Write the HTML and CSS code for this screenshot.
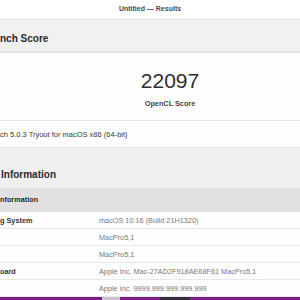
FILE: index.html
```html
<html><head>
<meta charset="UTF-8">
<meta name="viewport" content="width=device-width, initial-scale=1.0">
<title>Untitled — Results</title>
<link rel="stylesheet" href="styles.css">
</head>
<body>
  <div class="window">
    <header class="titlebar">Untitled — Results</header>

    <div class="section-head">nch Score</div>

    <div class="score-panel">
      <div class="score">22097</div>
      <div class="score-label">OpenCL Score</div>
    </div>

    <div class="version-row">ch 5.0.3 Tryout for macOS x86 (64-bit)</div>

    <div class="info-head">Information</div>

    <div class="info-table">
      <div class="table-head">nformation</div>
      <div class="row"><span class="name">g System</span><span class="value">macOS 10.16 (Build 21H1320)</span></div>
      <div class="row"><span class="name"></span><span class="value">MacPro5,1</span></div>
      <div class="row"><span class="name"></span><span class="value">MacPro5,1</span></div>
      <div class="row"><span class="name">oard</span><span class="value">Apple Inc. Mac-27AD2F918AE68F61 MacPro5,1</span></div>
      <div class="row"><span class="name"></span><span class="value">Apple Inc. 9999.999.999.999.999</span></div>
    </div>

    <div class="dock">
      <span class="dock-item light"></span>
      <span class="dock-item dark"></span>
    </div>
  </div>
</body>
</html>
```

FILE: styles.css
```css
body, html {
  margin: 0;
  padding: 0;
  font-family: "Liberation Sans", Arial, sans-serif;
  background-color: #ffffff;
  height: 100%;
  overflow: hidden;
}
.window {
  width: 300px;
  height: 300px;
  display: flex;
  flex-direction: column;
  overflow: hidden;
}
.titlebar {
  height: 19px;
  line-height: 17px;
  text-align: center;
  font-size: 7px;
  font-weight: bold;
  color: #4a4a4a;
  background-color: #ffffff;
  border-bottom: 1px solid #e6e0e8;
  flex-shrink: 0;
}
.section-head {
  height: 31px;
  line-height: 38px;
  font-size: 10px;
  font-weight: bold;
  color: #2a2a2a;
  background-color: #f2f1f2;
  border-bottom: 2px solid #ebe3ed;
  flex-shrink: 0;
}
.score-panel {
  height: 67px;
  background-color: #fefefe;
  border-bottom: 1px solid #e8e4ea;
  display: flex;
  flex-direction: column;
  align-items: center;
  padding-left: 40px;
  flex-shrink: 0;
}
.score {
  margin-top: 16px;
  font-size: 21px;
  line-height: 24px;
  color: #2e2e2e;
}
.score-label {
  margin-top: 6px;
  font-size: 7.3px;
  font-weight: bold;
  color: #444444;
}
.version-row {
  height: 26px;
  line-height: 27px;
  font-size: 7.5px;
  color: #3a3a3a;
  background-color: #fefefe;
  border-bottom: 1px solid #e6e2e8;
  flex-shrink: 0;
}
.info-head {
  height: 40px;
  line-height: 54px;
  padding-left: 1px;
  font-size: 10px;
  font-weight: bold;
  color: #2a2a2a;
  background-color: #f1f0f1;
  flex-shrink: 0;
}
.info-table {
  font-size: 7.3px;
  flex-shrink: 0;
}
.table-head {
  height: 24px;
  line-height: 24px;
  font-weight: bold;
  color: #2a2a2a;
  background-color: #e2e1e2;
}
.row {
  display: flex;
  align-items: center;
  height: 16px;
  border-bottom: 1px solid #e9e7ea;
  background-color: #fefefe;
}
.name {
  width: 99px;
  flex-shrink: 0;
  font-weight: bold;
  color: #333333;
}
.value {
  color: #787878;
  white-space: nowrap;
}
.dock {
  flex-grow: 1;
  background-color: #7c1c84;
  display: flex;
  align-items: flex-start;
}
.dock-item {
  height: 3px;
}
.dock-item.light {
  width: 18px;
  margin-left: 102px;
  background-color: #c9c4cc;
}
.dock-item.dark {
  width: 30px;
  margin-left: 40px;
  background-color: #3a2a3e;
}
```
